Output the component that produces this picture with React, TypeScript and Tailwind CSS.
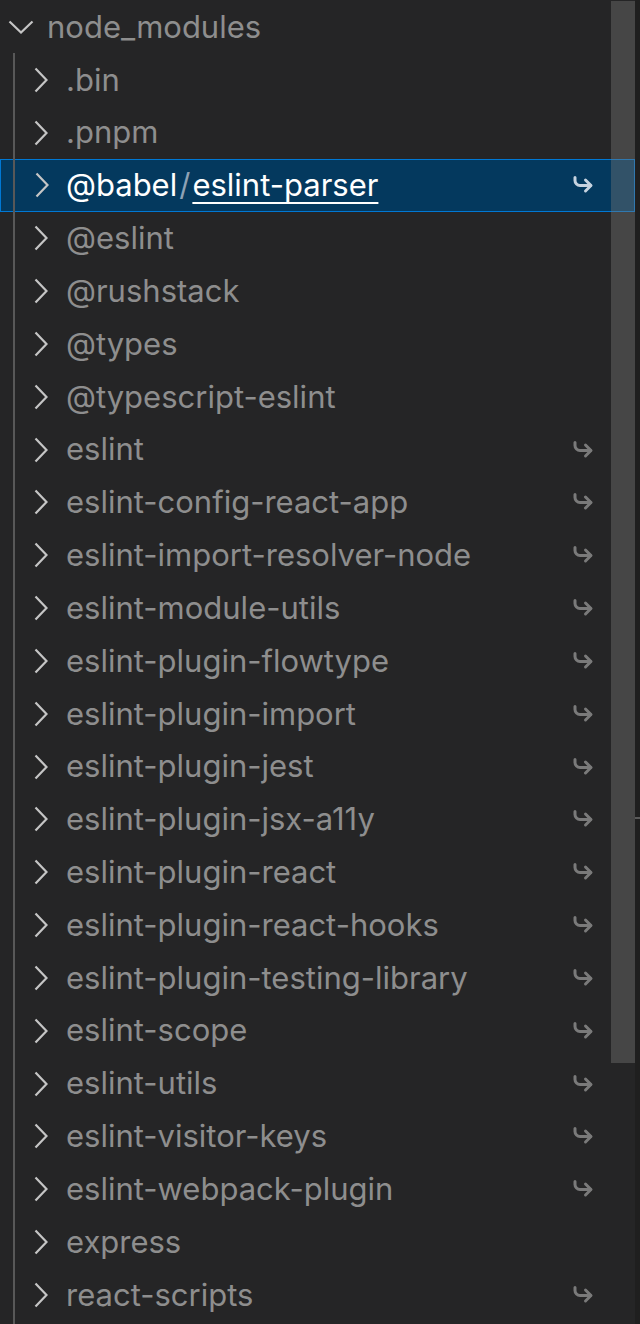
import React from "react";

type Item = { name: string; link?: boolean };

const items: Item[] = [
  { name: ".bin" },
  { name: ".pnpm" },
  { name: "@babel/eslint-parser", link: true },
  { name: "@eslint" },
  { name: "@rushstack" },
  { name: "@types" },
  { name: "@typescript-eslint" },
  { name: "eslint", link: true },
  { name: "eslint-config-react-app", link: true },
  { name: "eslint-import-resolver-node", link: true },
  { name: "eslint-module-utils", link: true },
  { name: "eslint-plugin-flowtype", link: true },
  { name: "eslint-plugin-import", link: true },
  { name: "eslint-plugin-jest", link: true },
  { name: "eslint-plugin-jsx-a11y", link: true },
  { name: "eslint-plugin-react", link: true },
  { name: "eslint-plugin-react-hooks", link: true },
  { name: "eslint-plugin-testing-library", link: true },
  { name: "eslint-scope", link: true },
  { name: "eslint-utils", link: true },
  { name: "eslint-visitor-keys", link: true },
  { name: "eslint-webpack-plugin", link: true },
  { name: "express" },
  { name: "react-scripts", link: true },
];

const Chevron = ({ down }: { down?: boolean }) =>
  down ? (
    <svg width="26" height="14" viewBox="0 0 26 14" className="shrink-0">
      <polyline points="1.5,1.5 13,12.5 24.5,1.5" fill="none" stroke="#c5c5c5" strokeWidth="2.2" />
    </svg>
  ) : (
    <svg width="14" height="26" viewBox="0 0 14 26" className="shrink-0">
      <polyline points="1.5,1.5 12.5,13 1.5,24.5" fill="none" stroke="#c5c5c5" strokeWidth="2.2" />
    </svg>
  );

// symlink arrow
const LinkArrow = ({ color }: { color: string }) => (
  <svg width="22" height="20" viewBox="0 0 22 20" className="shrink-0">
    <path
      d="M3 2.5 V5.5 A5 5 0 0 0 8 10.5 H18.5"
      fill="none"
      stroke={color}
      strokeWidth="3"
      strokeLinecap="round"
    />
    <polyline
      points="13.5,5 19,10.5 13.5,16"
      fill="none"
      stroke={color}
      strokeWidth="3"
      strokeLinecap="round"
      strokeLinejoin="round"
    />
  </svg>
);

const Row = ({ item }: { item: Item }) => {
  const selected = item.name === "@babel/eslint-parser";
  if (selected) {
    return (
      <div className="h-[52.83px] flex items-center pl-[34px] pr-[40px] bg-[#04395e] border border-[#0078d4] text-white">
        <Chevron />
        <span className="ml-[17px] flex-1 whitespace-nowrap">
          @babel
          <span className="text-[#8ea2b6] mx-[2px]">/</span>
          <span className="underline decoration-2 underline-offset-[6px]">eslint-parser</span>
        </span>
        <LinkArrow color="#c6d3e0" />
      </div>
    );
  }
  return (
    <div className="h-[52.83px] flex items-center pl-[34px] pr-[41px] text-[#8e8e8e]">
      <Chevron />
      <span className="ml-[18px] flex-1 whitespace-nowrap">{item.name}</span>
      {item.link && <LinkArrow color="#7a7a7a" />}
    </div>
  );
};

export default function App() {
  return (
    <div
      className="w-[640px] h-[1324px] bg-[#252526] flex relative overflow-hidden text-[31px]"
      style={{ fontFamily: "Inter, 'Open Sans', sans-serif" }}
    >
      <div className="w-[635px] flex flex-col pt-[0.6px]">
        <div className="h-[52.83px] flex items-center pl-[8px] text-[#8e8e8e]">
          <Chevron down />
          <span className="ml-[13px]">node_modules</span>
        </div>
        <div className="relative flex flex-col">
          {items.map((it) => (
            <Row key={it.name} item={it} />
          ))}
          <div className="absolute left-[13px] top-0 bottom-[-40px] w-[2px] bg-[#585858]" />
        </div>
      </div>
      <div className="w-[5px] bg-[#1f1f1f] relative">
        <div className="absolute left-0 right-0 top-[817px] h-[2px] bg-[#5a5a5a]" />
      </div>
      {/* scrollbar slider */}
      <div className="absolute left-[611px] top-[1px] w-[24px] h-[1062px] bg-[rgba(121,121,121,0.4)]" />
    </div>
  );
}
